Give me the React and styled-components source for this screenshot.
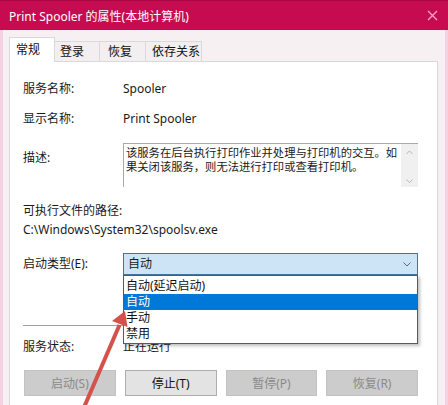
import styled, { createGlobalStyle } from 'styled-components';

const GlobalStyle = createGlobalStyle`
  html, body {
    margin: 0;
    padding: 0;
    background: #f7f0f3;
  }
  body {
    font-family: "Noto Sans", "Noto Sans CJK SC", sans-serif;
    font-size: 12px;
    color: #1a1a1a;
  }
`;

const Window = styled.div`
  position: relative;
  width: 448px;
  height: 405px;
  overflow: hidden;
  display: flex;
  flex-direction: column;
  background: #f7f0f3;
`;

const TitleBar = styled.div`
  height: 30px;
  flex: none;
  display: flex;
  align-items: center;
  justify-content: space-between;
  padding: 0 9px;
  background: #c60b51;
  border-top: 1px solid #a80842;
  box-sizing: border-box;
  color: #fff;
  font-size: 12px;
`;

const Close = styled.span`
  display: flex;
  margin-right: 1px;
`;

const Frame = styled.div`
  flex: 1;
  display: flex;
  flex-direction: column;
  padding: 8px 7px 0 6px;
  border-left: 3px solid #f4d2e2;
  border-right: 3px solid #f4d2e2;
`;

const TabRow = styled.div`
  display: flex;
  align-items: flex-end;
  height: 24px;
  position: relative;
  z-index: 1;
  margin-bottom: -1px;
`;

const Tab = styled.div`
  box-sizing: border-box;
  width: ${({ $w }) => $w}px;
  height: ${({ $active }) => ($active ? 25 : 21)}px;
  padding-left: ${({ $pad }) => $pad}px;
  padding-top: ${({ $active }) => ($active ? 3 : 1)}px;
  background: ${({ $active }) => ($active ? '#ffffff' : '#f3eef0')};
  border: 1px solid #d9d9d9;
  border-bottom: ${({ $active }) => ($active ? 'none' : '1px solid #d9d9d9')};
  margin-left: ${({ $first }) => ($first ? 0 : -1)}px;
  line-height: 17px;
  color: #111;
`;

const Panel = styled.div`
  flex: 1;
  background: #fff;
  border: 1px solid #d9d9d9;
  border-bottom: none;
  padding: 19px 19px 0 13px;
  display: flex;
  flex-direction: column;
`;

const Row = styled.div`
  display: grid;
  grid-template-columns: 100px 1fr;
  align-items: ${({ $top }) => ($top ? 'start' : 'center')};
  margin-top: ${({ $mt }) => $mt || 0}px;
  line-height: 16px;
`;

const Label = styled.div`
  padding-top: ${({ $pt }) => $pt || 0}px;
  color: #1a1a1a;
`;

const Line = styled.div`
  margin-top: ${({ $mt }) => $mt || 0}px;
  line-height: 16px;
`;

const DescBox = styled.div`
  height: 44px;
  display: flex;
  border-top: 1px solid #a9a9a9;
  border-left: 1px solid #a9a9a9;
  background: #fff;
  box-sizing: border-box;
`;

const DescText = styled.div`
  flex: 1;
  padding: 2px 0 0 2px;
  line-height: 14px;
  font-size: 11.3px;
  white-space: nowrap;
`;

const ScrollBar = styled.div`
  width: 17px;
  background: #f0f0f0;
  display: flex;
  flex-direction: column;
  justify-content: space-between;
  align-items: center;
  padding: 6px 0 4px;
  box-sizing: border-box;
`;

const SelectWrap = styled.div`
  position: relative;
`;

const Select = styled.div`
  height: 22px;
  box-sizing: border-box;
  border: 1px solid #4a7396;
  background: #cde4f7;
  display: flex;
  align-items: center;
  justify-content: space-between;
  padding: 0 6px 0 4px;
`;

const DropList = styled.div`
  position: absolute;
  top: 100%;
  left: 0;
  right: 0;
  background: #fff;
  border: 1px solid #5a5a5a;
  box-shadow: 2px 2px 3px rgba(0, 0, 0, 0.25);
  padding: 2px 0 1px;
  z-index: 3;
`;

const Option = styled.div`
  height: 16px;
  line-height: 16px;
  padding-left: 2px;
  background: ${({ $hl }) => ($hl ? '#0078d7' : 'transparent')};
  color: ${({ $hl }) => ($hl ? '#fff' : '#111')};
`;

const Separator = styled.div`
  height: 1px;
  background: #a0a0a0;
  margin-top: 50px;
`;

const ButtonRow = styled.div`
  display: grid;
  grid-template-columns: repeat(4, 1fr);
  column-gap: 9px;
  margin-top: 15px;
  padding-left: 1px;
`;

const Button = styled.div`
  height: 26px;
  box-sizing: border-box;
  display: flex;
  align-items: center;
  justify-content: center;
  background: ${({ disabled }) => (disabled ? '#cccccc' : '#e3e3e3')};
  border: 1px solid ${({ disabled }) => (disabled ? '#c2c2c2' : '#adadad')};
  color: ${({ disabled }) => (disabled ? '#8a8a8a' : '#111')};
`;

const Arrow = styled.svg`
  position: absolute;
  left: 0;
  top: 0;
  pointer-events: none;
  z-index: 5;
`;

const Chevron = ({ up, color = '#8a8a8a', w = 8 }) => (
  <svg width={w} height={w / 2 + 1} viewBox="0 0 8 5">
    <polyline
      points={up ? '0.5,4.5 4,1 7.5,4.5' : '0.5,0.5 4,4 7.5,0.5'}
      fill="none"
      stroke={color}
      strokeWidth="1"
    />
  </svg>
);

const tabs = [
  { name: '常规', w: 46, pad: 6, active: true },
  { name: '登录', w: 46, pad: 5 },
  { name: '恢复', w: 47, pad: 8 },
  { name: '依存关系', w: 57, pad: 6 },
];

const options = ['自动(延迟启动)', '自动', '手动', '禁用'];

export default function App() {
  return (
    <>
      <GlobalStyle />
      <Window>
        <TitleBar>
          <span>Print Spooler 的属性(本地计算机)</span>
          <Close>
            <svg width="11" height="11" viewBox="0 0 11 11">
              <path d="M1 1 L10 10 M10 1 L1 10" stroke="#f3a9c9" strokeWidth="1.3" />
            </svg>
          </Close>
        </TitleBar>
        <Frame>
          <TabRow>
            {tabs.map((t, k) => (
              <Tab key={k} $w={t.w} $pad={t.pad} $active={t.active} $first={k === 0}>
                {t.name}
              </Tab>
            ))}
          </TabRow>
          <Panel>
            <Row>
              <Label>服务名称:</Label>
              <div>Spooler</div>
            </Row>
            <Row $mt={14}>
              <Label>显示名称:</Label>
              <div>Print Spooler</div>
            </Row>
            <Row $mt={16} $top>
              <Label $pt={7}>描述:</Label>
              <DescBox>
                <DescText>
                  该服务在后台执行打印作业并处理与打印机的交互。如
                  <br />
                  果关闭该服务，则无法进行打印或查看打印机。
                </DescText>
                <ScrollBar>
                  <Chevron up color="#b0b0b0" w={7} />
                  <Chevron color="#b0b0b0" w={7} />
                </ScrollBar>
              </DescBox>
            </Row>
            <Line $mt={16}>可执行文件的路径:</Line>
            <Line $mt={3}>C:\Windows\System32\spoolsv.exe</Line>
            <Row $mt={15}>
              <Label>启动类型(E):</Label>
              <SelectWrap>
                <Select>
                  <span>自动</span>
                  <Chevron color="#6a6a6a" />
                </Select>
                <DropList>
                  {options.map((o, k) => (
                    <Option key={k} $hl={k === 1}>{o}</Option>
                  ))}
                </DropList>
              </SelectWrap>
            </Row>
            <Separator />
            <Row $mt={13}>
              <Label>服务状态:</Label>
              <div>正在运行</div>
            </Row>
            <ButtonRow>
              <Button disabled>启动(S)</Button>
              <Button>停止(T)</Button>
              <Button disabled>暂停(P)</Button>
              <Button disabled>恢复(R)</Button>
            </ButtonRow>
          </Panel>
        </Frame>
        <Arrow width="448" height="405" viewBox="0 0 448 405">
          <line x1="82" y1="412" x2="119.5" y2="325" stroke="#d4524c" strokeWidth="4" />
          <polygon points="125,311 127.5,327 112,321" fill="#d4524c" />
        </Arrow>
      </Window>
    </>
  );
}
